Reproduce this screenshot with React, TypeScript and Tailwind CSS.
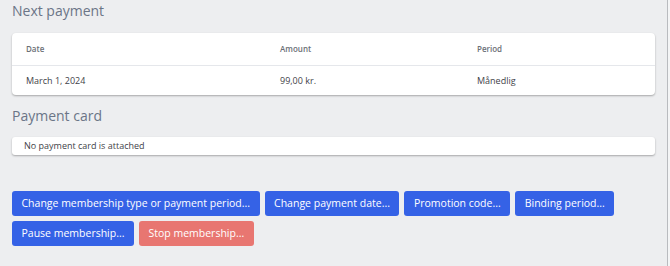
const rows = [
  [
    { label: "Change membership type or payment period...", tone: "blue" },
    { label: "Change payment date...", tone: "blue" },
    { label: "Promotion code...", tone: "blue" },
    { label: "Binding period...", tone: "blue" },
  ],
  [
    { label: "Pause membership...", tone: "blue" },
    { label: "Stop membership...", tone: "red" },
  ],
];

export default function App() {
  return (
    <div className="flex h-[266px] w-[670px] bg-[#edeef0] font-['Open_Sans',sans-serif]">
      <div className="w-[667px] px-3 pt-[1px]">
        <h2 className="text-[14px] leading-[20px] text-[#6b7587]">Next payment</h2>
        <div className="mt-[12px] rounded bg-white shadow-[0_1px_2px_rgba(0,0,0,0.3)]">
          <div className="grid h-[33px] grid-cols-[254px_197px_1fr] items-center border-b border-[#e5e7eb] px-[14px] text-[8px] font-semibold text-[#6b6f76]">
            <span>Date</span>
            <span>Amount</span>
            <span>Period</span>
          </div>
          <div className="grid h-[29px] grid-cols-[254px_197px_1fr] items-center px-[14px] text-[9px] text-[#3f4349]">
            <span>March 1, 2024</span>
            <span>99,00 kr.</span>
            <span>Månedlig</span>
          </div>
        </div>
        <h2 className="mt-[11px] text-[14px] leading-[20px] text-[#6b7587]">Payment card</h2>
        <div className="mt-[11px] flex h-[18px] items-center rounded-[3px] bg-white px-3 text-[9px] text-[#3f4349] shadow-[0_1px_2px_rgba(0,0,0,0.3)]">
          No payment card is attached
        </div>
        <div className="mt-[36px] flex flex-col gap-[5px]">
          {rows.map((row, i) => (
            <div key={i} className="flex gap-[5px]">
              {row.map((a) => (
                <button
                  key={a.label}
                  className={
                    "h-[25px] rounded-[3px] px-[9.5px] text-[10.5px] text-white " +
                    (a.tone === "red" ? "bg-[#e87671]" : "bg-[#3562e6]")
                  }
                >
                  {a.label}
                </button>
              ))}
            </div>
          ))}
        </div>
      </div>
      <div className="w-[1px] bg-[#b9bbbf]" />
      <div className="flex-1 bg-[#f4f5f6]" />
    </div>
  );
}
